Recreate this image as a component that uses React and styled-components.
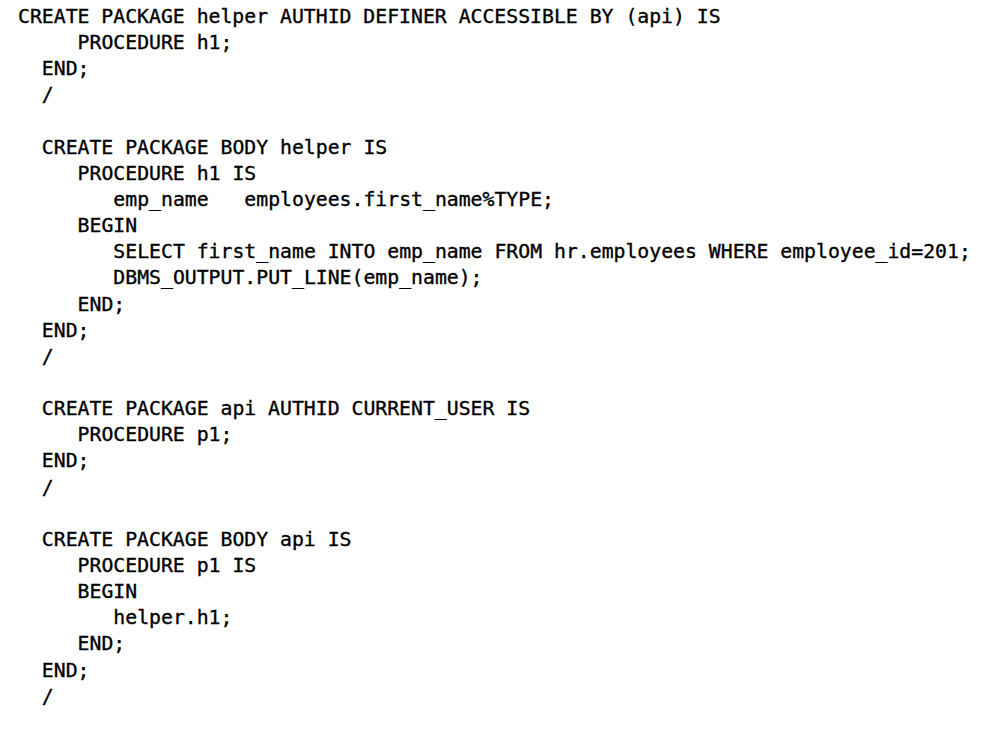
import React from "react";
import styled, { createGlobalStyle } from "styled-components";

const Global = createGlobalStyle`
  html, body { margin: 0; padding: 0; background: #ffffff; }
`;

const Listing = styled.div`
  display: flex;
  flex-direction: column;
  padding: 4px 0 0 18px;
  font-family: "DejaVu Sans Mono", "Liberation Mono", monospace;
  font-size: 19.8px;
  line-height: 26.15px;
  color: #000000;
  -webkit-text-stroke: 0.35px #000000;
`;

const Line = styled.div`
  white-space: pre;
  height: 26.15px;
  padding-left: ${(p) => p.$indent * 0.602}em;
`;

const lines = [
  [0, "CREATE PACKAGE helper AUTHID DEFINER ACCESSIBLE BY (api) IS"],
  [5, "PROCEDURE h1;"],
  [2, "END;"],
  [2, "/"],
  [0, ""],
  [2, "CREATE PACKAGE BODY helper IS"],
  [5, "PROCEDURE h1 IS"],
  [8, "emp_name   employees.first_name%TYPE;"],
  [5, "BEGIN"],
  [8, "SELECT first_name INTO emp_name FROM hr.employees WHERE employee_id=201;"],
  [8, "DBMS_OUTPUT.PUT_LINE(emp_name);"],
  [5, "END;"],
  [2, "END;"],
  [2, "/"],
  [0, ""],
  [2, "CREATE PACKAGE api AUTHID CURRENT_USER IS"],
  [5, "PROCEDURE p1;"],
  [2, "END;"],
  [2, "/"],
  [0, ""],
  [2, "CREATE PACKAGE BODY api IS"],
  [5, "PROCEDURE p1 IS"],
  [5, "BEGIN"],
  [8, "helper.h1;"],
  [5, "END;"],
  [2, "END;"],
  [2, "/"],
];

export default function App() {
  return (
    <>
      <Global />
      <Listing>
        {lines.map(([indent, text], i) => (
          <Line key={i} $indent={indent}>
            {text}
          </Line>
        ))}
      </Listing>
    </>
  );
}
